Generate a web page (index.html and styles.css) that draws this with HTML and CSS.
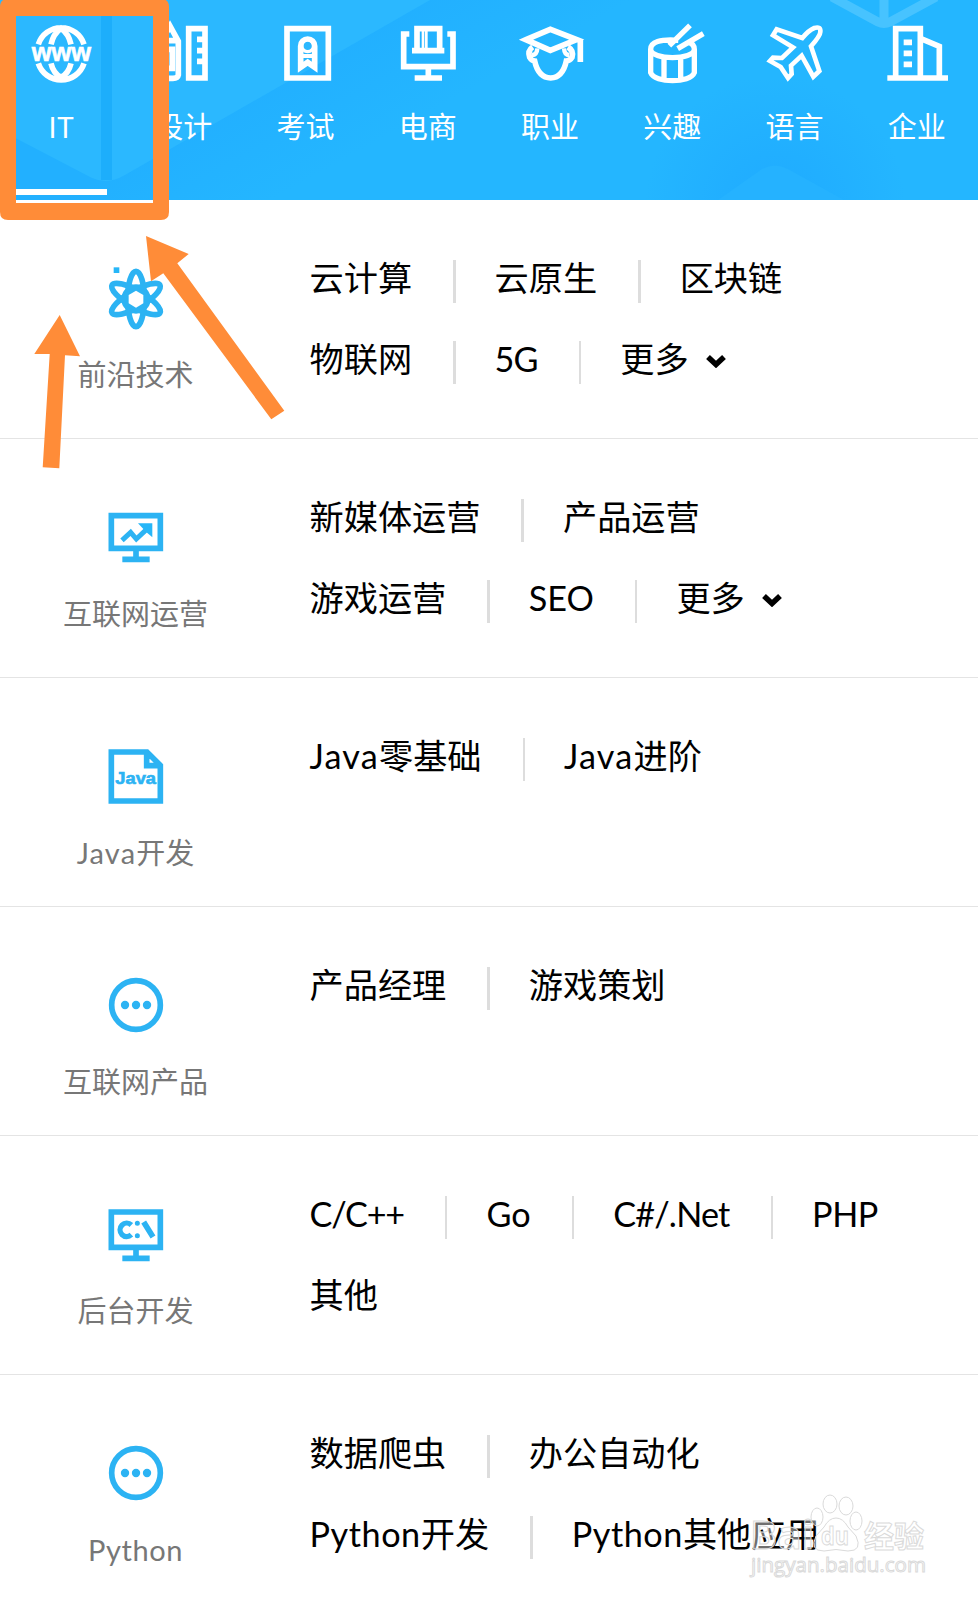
FILE: index.html
```html
<!DOCTYPE html>
<html lang="zh-CN">
<head>
<meta charset="utf-8">
<meta name="viewport" content="width=device-width, initial-scale=1">
<title>课程分类</title>
<link rel="stylesheet" href="styles.css">
</head>
<body>
<div class="page">
  <header class="header">
    <svg class="header-bg" viewBox="0 0 978 200">
      <defs>
        <linearGradient id="g1" gradientUnits="userSpaceOnUse" x1="250" y1="95" x2="300" y2="185">
          <stop offset="0" stop-color="#22b0ff"/><stop offset="1" stop-color="#24b6ff"/>
        </linearGradient>
        <radialGradient id="g2" gradientUnits="userSpaceOnUse" cx="775" cy="205" r="130">
          <stop offset="0" stop-color="#20abff"/><stop offset=".4" stop-color="#21afff"/><stop offset="1" stop-color="#24b6ff"/>
        </radialGradient>
      </defs>
      <rect width="978" height="200" fill="#24b6ff"/>
      <path d="M0 128 100 180 430 0H700L560 200H0Z" fill="url(#g1)"/>
      <path d="M0 0H430L125 175Q108 185 92 178L0 130Z" fill="#2bb8ff"/>
      <path d="M101 0h11v180h-11z" fill="#1daefb"/>
      <rect x="620" y="80" width="320" height="120" fill="url(#g2)"/>
      <path d="M718 200 762 169Q775 162 788 169L844 200Z" fill="#25b2ff"/>
      <path d="M832-3 878 22Q884 25 890 22L936-3M884 0V22" fill="none" stroke="#47c3ff" stroke-width="9"/>
    </svg>
    <nav class="tabs">
      <a class="tab tab-active">
        <svg class="tab-icon" viewBox="63 56 240 210">
          <path d="M115 135A72 72 0 0 1 252 135M115 192A72 72 0 0 0 252 192M153 135Q160 104 183 87Q206 104 213 135M153 192Q160 222 183 234Q206 222 213 192" stroke-width="17"/>
          <text x="95" y="186" textLength="178" lengthAdjust="spacingAndGlyphs" class="www">www</text>
        </svg>
        <span>IT</span>
      </a>
      <a class="tab">
        <svg class="tab-icon" viewBox="430 54 240 210">
          <path d="M485 235V124L511 78 536 124V225Q534 235 520 235ZM495 122H530M495 148H518V205H495M567 86H616V234H567ZM616 118H592M616 152H592M616 184H592"/>
        </svg>
        <span>设计</span>
      </a>
      <a class="tab">
        <svg class="tab-icon" viewBox="77 54 240 210">
          <path d="M140 86H264V234H140Z"/><path d="M181 202V138A21 21 0 0 1 223 138V202L202 187Z" stroke-width="17"/><circle cx="202" cy="137" r="18" stroke-width="10"/><path d="M181 168H223" stroke-width="12"/>
        </svg>
        <span>考试</span>
      </a>
      <a class="tab">
        <svg class="tab-icon" viewBox="444 54 240 210">
          <path d="M508 102H491V200H639V102H622M516 152H613M531 152V86H599V152M565 202V234M524 234H606"/><path d="M549 86V152M559 86V152" stroke-width="8"/>
        </svg>
        <span>电商</span>
      </a>
      <a class="tab">
        <svg class="tab-icon" viewBox="810 54 240 210">
          <path d="M858 119 931 88 1010 119 931 151ZM1021 119V186M878 141Q862 152 869 172Q875 182 884 183Q895 233 932 234Q968 233 979 183Q990 182 996 172Q1002 152 984 141"/><path d="M876 165Q891 165 892 145M988 165Q973 165 972 145" stroke-width="13"/>
        </svg>
        <span>职业</span>
      </a>
      <a class="tab">
        <svg class="tab-icon" viewBox="97 54 240 210">
          <path d="M236 121Q153 115 153 148C153 181 284 181 284 148Q284 132 268 127M153 148V218C165 250 272 250 284 218V148M193 175V236M243 175V236M271 76 209 137M311 101 234 146" stroke-width="16"/>
        </svg>
        <span>兴趣</span>
      </a>
      <a class="tab">
        <svg class="tab-icon" viewBox="464 54 240 210">
          <path d="M606 114 529 88 518 106 578 142 545 174 518 173 509 183 541 201 563 234 574 222 572 197 604 167 639 230 657 213 632 139Q660 107 660 96Q662 78 642 84Q625 91 606 114Z" stroke-width="14"/>
        </svg>
        <span>语言</span>
      </a>
      <a class="tab">
        <svg class="tab-icon" viewBox="831 54 240 210">
          <path d="M862 234H1044M887 234V86H961V234M961 115 1018 139V234M911 127H936M911 160H936M911 193H936"/>
        </svg>
        <span>企业</span>
      </a>
    </nav>
  </header>

  <main class="list">
    <section class="row">
      <div class="cat">
        <svg class="cat-icon" viewBox="309 136 198 198">
          <path d="M341 143h17v17h-17z" fill="#26b6f8" stroke="none"/>
          <circle cx="408" cy="238" r="44" fill="#2cb3f3" stroke="none"/>
          <g stroke-width="17"><ellipse cx="408" cy="238" rx="25" ry="83"/><ellipse cx="408" cy="238" rx="25" ry="83" transform="rotate(60 408 238)"/><ellipse cx="408" cy="238" rx="25" ry="83" transform="rotate(120 408 238)"/></g>
          <path d="M408 213 430 226V251L408 264 386 251V226Z" fill="#fff" stroke="none"/>
        </svg>
        <span>前沿技术</span>
      </div>
      <div class="links">
        <div class="line"><a>云计算</a><a>云原生</a><a>区块链</a></div>
        <div class="line"><a>物联网</a><a class="five-g">5G</a><a class="more">更多<svg class="chev" viewBox="0 0 20 14"><path d="M2 3 10 10.500 18 3"/></svg></a></div>
      </div>
    </section>
    <section class="row">
      <div class="cat">
        <svg class="cat-icon" viewBox="158 39 198 198">
          <path d="M183 74H330V172H183ZM257 174V205M216 205H298"/><path d="M215 148 241 124 258 144 292 112" stroke-width="15"/><path d="M263 97H306V139L291 126 277 112Z" fill="#26b6f8" stroke="none"/>
        </svg>
        <span>互联网运营</span>
      </div>
      <div class="links">
        <div class="line"><a>新媒体运营</a><a>产品运营</a></div>
        <div class="line"><a>游戏运营</a><a>SEO</a><a class="more">更多<svg class="chev" viewBox="0 0 20 14"><path d="M2 3 10 10.500 18 3"/></svg></a></div>
      </div>
    </section>
    <section class="row">
      <div class="cat">
        <svg class="cat-icon" viewBox="158 36 198 198">
          <path d="M183 63H290L330 103V210H183ZM289 63V104H330"/><text x="195" y="158" textLength="122" lengthAdjust="spacingAndGlyphs" class="glyph-text">Java</text>
        </svg>
        <span><span class="java">Java</span>开发</span>
      </div>
      <div class="links">
        <div class="line"><a><span class="java">Java</span>零基础</a><a><span class="java">Java</span>进阶</a></div>
      </div>
    </section>
    <section class="row">
      <div class="cat">
        <svg class="cat-icon" viewBox="158 35 198 198">
          <circle cx="257" cy="134" r="73"/><path d="M224 134h.1M257 134h.1M290 134h.1" stroke-width="25" stroke-linecap="round"/>
        </svg>
        <span>互联网产品</span>
      </div>
      <div class="links">
        <div class="line"><a>产品经理</a><a>游戏策划</a></div>
      </div>
    </section>
    <section class="row">
      <div class="cat">
        <svg class="cat-icon" viewBox="158 36 198 198">
          <path d="M183 69H330V175H183ZM257 177V208M216 208H298M280 99 308 144"/><path d="M243 108A20 20 0 1 0 243 137" stroke-width="16"/><path d="M261 103h.1M261 140h.1" stroke-width="15" stroke-linecap="round"/>
        </svg>
        <span>后台开发</span>
      </div>
      <div class="links">
        <div class="line"><a class="cpp">C/C++</a><a>Go</a><a class="net">C#/.Net</a><a class="php">PHP</a></div>
        <div class="line"><a>其他</a></div>
      </div>
    </section>
    <section class="row">
      <div class="cat">
        <svg class="cat-icon" viewBox="158 35 198 198">
          <circle cx="257" cy="134" r="73"/><path d="M224 134h.1M257 134h.1M290 134h.1" stroke-width="25" stroke-linecap="round"/>
        </svg>
        <span class="python">Python</span>
      </div>
      <div class="links">
        <div class="line"><a>数据爬虫</a><a>办公自动化</a></div>
        <div class="line"><a><span class="python">Python</span>开发</a><a><span class="python">Python</span>其他应用</a></div>
      </div>
    </section>
  </main>

  <svg class="overlay" viewBox="0 0 978 1600">
    <g fill="#ff8c38">
      <path fill-rule="evenodd" d="M8-1H161Q169-1 169 7V212Q169 220 161 220H8Q0 220 0 212V7Q0-1 8-1ZM16 16V203H153V16Z"/>
      <path d="M59.700 315 80 356.300 65 355.300 59.300 468.300 42.700 467.300 49.700 354 34.300 354Z"/>
      <path d="M146 236 188.700 254 177.300 263.300 284.300 410.700 271.300 419.300 163.300 273.300 151 281.300Z"/>
    </g>
    <g class="mark">
      <text x="750" y="1549" font-size="39" font-weight="700" textLength="64" lengthAdjust="spacingAndGlyphs">Bai</text>
      <path d="M836 1518Q843 1518 848 1527L856 1536Q863 1551 848 1551Q836 1548 824 1551Q809 1551 816 1536L824 1527Q829 1518 836 1518Z"/>
      <ellipse cx="817" cy="1517" rx="6" ry="9"/><ellipse cx="830" cy="1504" rx="7" ry="9"/><ellipse cx="846" cy="1506" rx="7" ry="9"/><ellipse cx="856" cy="1521" rx="6" ry="9"/>
      <text x="821" y="1545" font-size="25" font-weight="700" textLength="28" lengthAdjust="spacingAndGlyphs">du</text>
      <text x="864" y="1547" font-size="30" font-weight="700" textLength="60" lengthAdjust="spacingAndGlyphs">经验</text>
      <text x="751" y="1572" font-size="20" textLength="175" lengthAdjust="spacingAndGlyphs">jingyan.baidu.com</text>
    </g>
  </svg>
</div>
</body>
</html>
```
FILE: styles.css
```css
* { box-sizing: border-box; }
body {
  margin: 0;
  background: #fff;
  font-family: Lato, "Noto Sans CJK SC", sans-serif;
}
.page {
  position: relative;
  width: 978px;
  height: 1600px;
  overflow: hidden;
}
.header { position: relative; height: 200px; }
.header-bg { position: absolute; inset: 0; width: 978px; height: 200px; }
.tabs {
  position: relative;
  display: grid;
  grid-template-columns: repeat(8, 1fr);
  height: 200px;
}
.tab {
  display: flex;
  flex-direction: column;
  align-items: center;
  padding-top: 18px;
  color: #fff;
  font-size: 29px;
  line-height: 40px;
}
.tab span { margin-top: 17px; font-family: "Noto Sans CJK SC", sans-serif; }
.tab-active::after {
  content: "";
  width: 92px;
  height: 6px;
  margin-top: 44px;
  background: #fff;
}
.tab-icon {
  flex: none;
  width: 80px;
  height: 70px;
  fill: none;
  stroke: #fff;
  stroke-width: 17;
}
.www {
  fill: #fff;
  stroke-width: 2;
  font: 700 80px "Liberation Sans", sans-serif;
}
.list {
  display: grid;
  grid-template-rows: 239px 239px 229px 229px 239px 225px;
}
.row {
  display: grid;
  grid-template-columns: 271px 1fr;
  border-bottom: 1px solid #e4e4e4;
}
.row:last-child { border-bottom: 0; }
.cat {
  display: flex;
  flex-direction: column;
  align-items: center;
  padding-top: 65px;
  color: #777;
  font-size: 29px;
  line-height: 40px;
}
.cat > span { margin-top: 24px; }
.cat-icon {
  flex: none;
  width: 66px;
  height: 66px;
  fill: none;
  stroke: #2cb3f3;
  stroke-width: 17;
}
.glyph-text {
  fill: #2cb3f3;
  stroke-width: 2;
  font: 700 52px "Liberation Sans", sans-serif;
}
.links { padding: 54px 0 0 38.500px; }
.line {
  display: flex;
  height: 80.700px;
  color: #000;
  font-size: 34.200px;
  line-height: 47px;
  white-space: nowrap;
}
.line a + a {
  display: flex;
  margin-left: 41px;
}
.line a + a::before {
  content: "";
  width: 2.500px;
  height: 43px;
  margin: 6px 39px 0 0;
  background: #ddd;
}
.java { letter-spacing: 1.200px; }
.python { letter-spacing: .55px; }
.five-g { letter-spacing: -.8px; }
.cpp { letter-spacing: -1.200px; }
.net { letter-spacing: -.8px; }
.php { letter-spacing: -.4px; }
.chev {
  width: 20px;
  height: 14px;
  margin: 19px 0 0 17px;
  fill: none;
  stroke: #000;
  stroke-width: 5.500;
}
.overlay {
  position: absolute;
  inset: 0;
  width: 978px;
  height: 1600px;
  pointer-events: none;
}
.mark {
  fill: rgba(255, 255, 255, .45);
  stroke: #dadada;
  stroke-width: 1;
  font-family: "Open Sans", "Noto Sans CJK SC", sans-serif;
}
```
